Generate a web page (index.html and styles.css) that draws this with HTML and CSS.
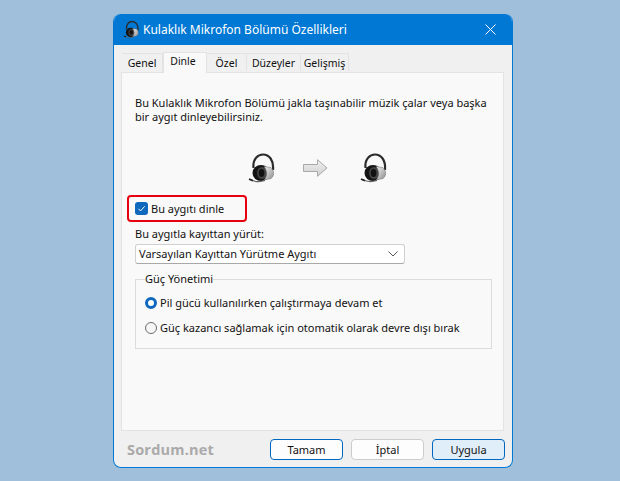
FILE: index.html
```html
<!DOCTYPE html>
<html lang="tr">
<head>
    <meta charset="UTF-8">
    <title>Kulaklık Mikrofon Bölümü Özellikleri</title>
    <link rel="stylesheet" href="styles.css">
</head>
<body>
    <svg class="defs" width="0" height="0">
        <defs>
            <linearGradient id="silver" x1="0" y1="0" x2="1" y2="1">
                <stop offset="0" stop-color="#f2f2f2"/>
                <stop offset="1" stop-color="#8c8c8c"/>
            </linearGradient>
            <linearGradient id="arrow-fill" x1="0" y1="0" x2="0" y2="1">
                <stop offset="0" stop-color="#f0f0f0"/>
                <stop offset="1" stop-color="#cfcfcf"/>
            </linearGradient>
            <symbol id="headset" viewBox="0 0 28 32">
                <!-- band -->
                <path d="M5.500 16C4.500 7 10 2.500 15 2.500C21 2.500 26 8 25 18" fill="none" stroke="#2c2c2c" stroke-width="2.200"/>
                <!-- ear cup -->
                <ellipse cx="13" cy="21" rx="8.500" ry="8" fill="#141414"/>
                <ellipse cx="14" cy="21" rx="5" ry="6" fill="#454545"/>
                <ellipse cx="13.500" cy="21" rx="2.800" ry="4" fill="#111"/>
                <path d="M16 14.500L23 15.500C26.500 19 26.500 24 23 26.500L16 28C19.500 24 19.500 19 16 14.500Z" fill="url(#silver)" stroke="#666" stroke-width=".5"/>
                <!-- mic -->
                <path d="M2 27.500C7 30 11 30.500 17 28.500" fill="none" stroke="#666" stroke-width="1.200"/>
                <path d="M1 27L5 28.800" stroke="#222" stroke-width="1.800"/>
            </symbol>
        </defs>
    </svg>

    <div class="window">
        <div class="titlebar">
            <svg class="title-icon"><use href="#headset"/></svg>
            <span class="title-text">Kulaklık Mikrofon Bölümü Özellikleri</span>
            <svg class="close-icon" viewBox="0 0 11 11">
                <path d="M.5 .5L10.500 10.500M10.500 .5L.5 10.500" stroke="#fff" stroke-width="1" fill="none"/>
            </svg>
        </div>

        <div class="content">
            <!-- Tabs -->
            <div class="tabs">
                <div class="tab tab-genel">Genel</div>
                <div class="tab tab-dinle active">Dinle</div>
                <div class="tab tab-ozel">Özel</div>
                <div class="tab tab-duzeyler">Düzeyler</div>
                <div class="tab tab-gelismis">Gelişmiş</div>
            </div>

            <div class="panel">
                <p class="intro">Bu Kulaklık Mikrofon Bölümü jakla taşınabilir müzik çalar veya başka<br>bir aygıt dinleyebilirsiniz.</p>

                <div class="devices">
                    <svg class="device"><use href="#headset"/></svg>
                    <svg class="flow-arrow" viewBox="0 0 25 18">
                        <path d="M.5 5.500H14.500V.7L24 9L14.500 17.300V12.500H.5Z" fill="url(#arrow-fill)" stroke="#a8a8a8"/>
                    </svg>
                    <svg class="device"><use href="#headset"/></svg>
                </div>

                <!-- Red highlight -->
                <div class="highlight">
                    <span class="checkbox">
                        <svg viewBox="0 0 13 13"><path d="M3.500 6.800L5.600 8.900L9.600 4.400" fill="none" stroke="#fff" stroke-width="1"/></svg>
                    </span>
                    <span>Bu aygıtı dinle</span>
                </div>

                <div class="field-label">Bu aygıtla kayıttan yürüt:</div>
                <div class="select">
                    <span>Varsayılan Kayıttan Yürütme Aygıtı</span>
                    <svg class="chevron" viewBox="0 0 10 6"><path d="M.5 .5L5 5L9.500 .5" fill="none" stroke="#555" stroke-width="1"/></svg>
                </div>

                <fieldset class="group">
                    <legend>Güç Yönetimi</legend>
                    <div class="radio-row">
                        <span class="radio checked"></span>
                        <span>Pil gücü kullanılırken çalıştırmaya devam et</span>
                    </div>
                    <div class="radio-row">
                        <span class="radio"></span>
                        <span>Güç kazancı sağlamak için otomatik olarak devre dışı bırak</span>
                    </div>
                </fieldset>
            </div>

            <div class="footer">
                <span class="watermark">Sordum.net</span>
                <div class="buttons">
                    <button class="btn primary">Tamam</button>
                    <button class="btn">İptal</button>
                    <button class="btn apply">Uygula</button>
                </div>
            </div>
        </div>
    </div>
</body>
</html>
```

FILE: styles.css
```css
* {
    box-sizing: border-box;
}

body {
    margin: 0;
    height: 481px;
    padding: 14px 0 0 113px;
    overflow: hidden;
    background-color: #a0bfda;
    font-family: "Noto Sans", Arial, sans-serif;
    font-size: 11px;
    color: #111;
}

.defs {
    position: absolute;
}

/* Window */
.window {
    width: 400px;
    height: 454px;
    border: 1px solid #0078d4;
    border-top: none;
    border-radius: 8px;
    overflow: hidden;
    background-color: #f0f0f0;
    display: flex;
    flex-direction: column;
}

.titlebar {
    height: 31px;
    flex: none;
    background-color: #0078d4;
    color: #fff;
    display: flex;
    align-items: center;
    padding: 0 16px 0 9px;
}

.title-icon {
    width: 17px;
    height: 19px;
    margin-right: 3px;
}

.title-text {
    flex: 1;
    font-size: 12px;
}

.close-icon {
    width: 11px;
    height: 11px;
}

.content {
    flex: 1;
    padding: 7px 8px 7px 7px;
    display: flex;
    flex-direction: column;
}

/* Tabs */
.tabs {
    display: flex;
    align-items: flex-end;
    height: 20px;
    padding-left: 1px;
    position: relative;
    z-index: 1;
    font-size: 10.5px;
}

.tab {
    height: 18px;
    border: 1px solid #e3e3e3;
    border-bottom: none;
    border-left: none;
    background-color: #f0f0f0;
    text-align: center;
    line-height: 19px;
    margin-bottom: 1px;
}

.tab.active {
    height: 21px;
    margin-bottom: -1px;
    padding-right: 4px;
    background-color: #f9f9f9;
    border-left: 1px solid #e3e3e3;
    line-height: 17px;
}

.tab-genel { width: 41px; }
.tab-dinle { width: 44px; }
.tab-ozel { width: 40px; }
.tab-duzeyler { width: 54px; }
.tab-gelismis { width: 48px; }

.panel {
    height: 359px;
    width: 383px;
    background-color: #f9f9f9;
    border: 1px solid #e3e3e3;
    padding: 23px 11px 0 13px;
}

.intro {
    margin: 0;
    line-height: 14px;
}

.devices {
    display: flex;
    align-items: center;
    height: 32px;
    margin: 28px 0 0 113px;
}

.device {
    width: 28px;
    height: 32px;
}

.flow-arrow {
    width: 25px;
    height: 18px;
    margin: 0 32px 0 27px;
}

/* Red highlight round the checkbox */
.highlight {
    width: 120px;
    height: 27px;
    margin: 11px 0 0 -8px;
    border: 2px solid #e60012;
    border-radius: 4px;
    display: flex;
    align-items: center;
    padding-left: 6px;
    gap: 3px;
}

.checkbox {
    width: 13px;
    height: 13px;
    border-radius: 3px;
    background-color: #0f68bd;
    display: block;
}

.checkbox svg {
    display: block;
}

.field-label {
    margin-top: 4px;
    line-height: 16px;
    height: 18px;
}

.select {
    width: 270px;
    height: 20px;
    background-color: #fff;
    border: 1px solid #d0d0d0;
    border-bottom-color: #a8a8a8;
    border-radius: 3px;
    display: flex;
    align-items: center;
    justify-content: space-between;
    padding: 0 6px 1px 3px;
}

.chevron {
    width: 10px;
    height: 6px;
}

/* Power group */
.group {
    width: 357px;
    height: 77px;
    margin: 8px 0 0;
    padding: 4px 0 0 9px;
    border: 1px solid #dcdcdc;
}

.group legend {
    padding: 0;
    margin-left: 0;
    line-height: 14px;
}

.radio-row {
    display: flex;
    align-items: center;
    gap: 3px;
    height: 25px;
}

.radio {
    width: 12px;
    height: 12px;
    border: 1px solid #6e6e6e;
    border-radius: 50%;
    background-color: #f6f6f6;
}

.radio.checked {
    border: 3.5px solid #0f68bd;
    background-color: #fff;
}

/* Footer */
.footer {
    display: flex;
    justify-content: space-between;
    align-items: center;
    height: 21px;
    margin-top: 8px;
    margin-right: -1px;
}

.watermark {
    margin-left: 6px;
    font-family: "Open Sans", Arial, sans-serif;
    font-size: 14.5px;
    font-weight: 700;
    letter-spacing: .2px;
    color: #aaaaaa;
}

.buttons {
    display: flex;
    gap: 8px;
}

.btn {
    width: 73px;
    height: 21px;
    padding: 0;
    border: 1px solid #cccccc;
    border-radius: 4px;
    background-color: #fdfdfd;
    color: #111;
    font-family: inherit;
    font-size: 11px;
}

.btn.primary {
    border-color: #0067c0;
}

.btn.apply {
    border-color: #0067c0;
    background-color: #e0eefa;
}
```
